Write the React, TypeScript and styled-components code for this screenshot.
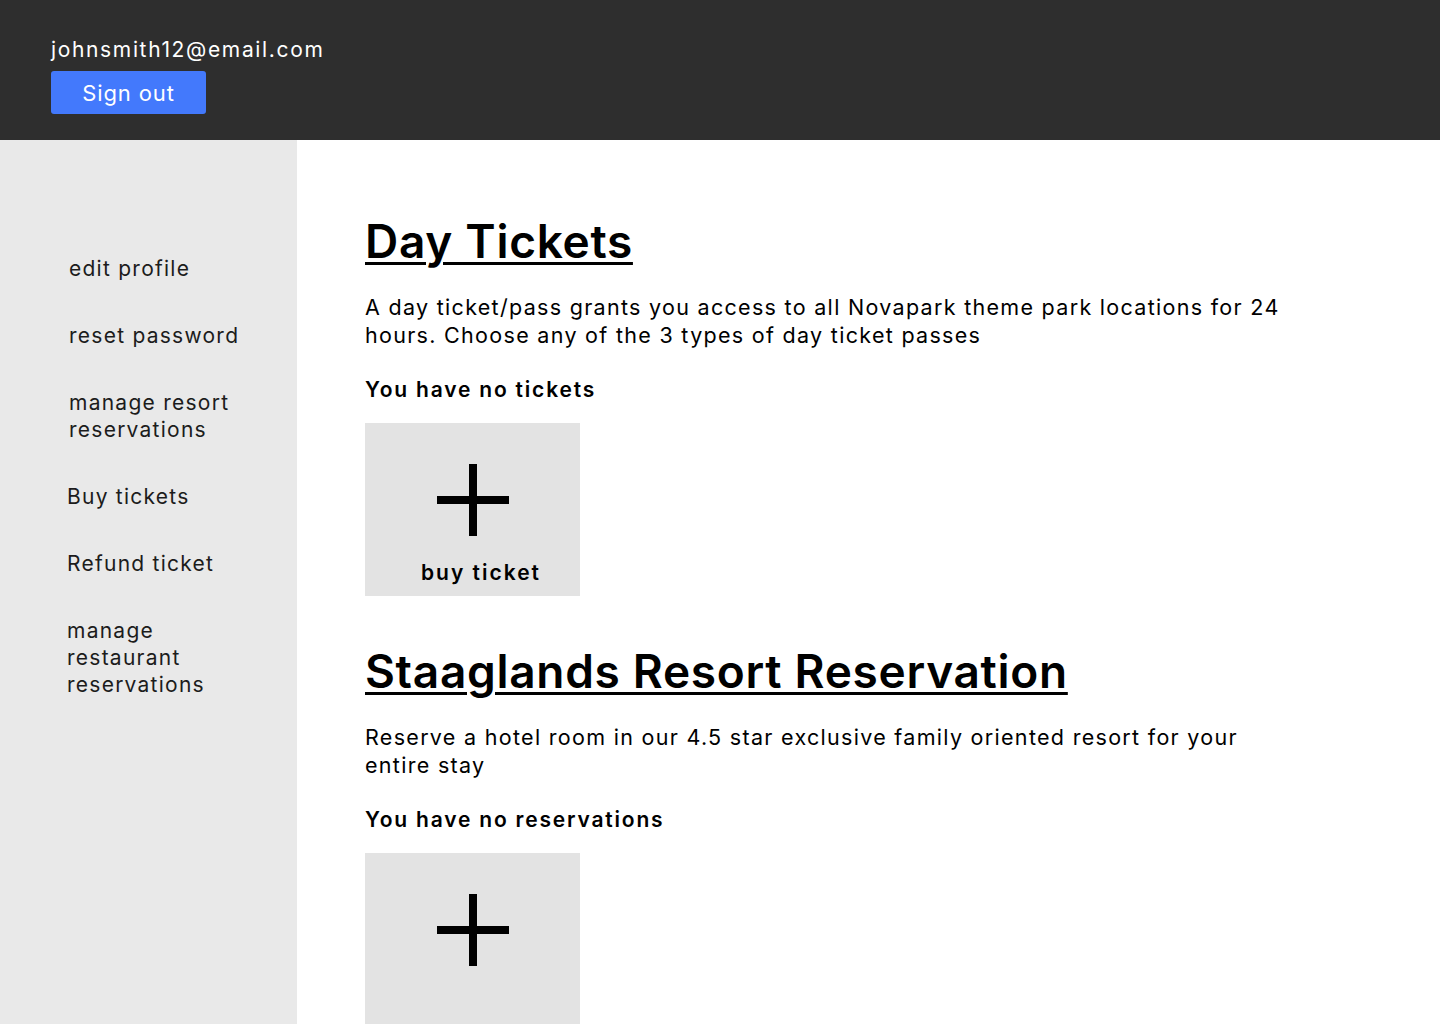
import styled, { createGlobalStyle } from "styled-components";

const GlobalStyle = createGlobalStyle`
   html, body {
      margin: 0;
      padding: 0;
   }
   body {
      font-family: Inter, "Noto Sans", sans-serif;
      color: #000;
   }
   * {
      box-sizing: border-box;
   }
`;

const sideLinks = [
   { label: "edit profile", indent: 69 },
   { label: "reset password", indent: 69 },
   { label: "manage resort reservations", indent: 69 },
   { label: "Buy tickets", indent: 67 },
   { label: "Refund ticket", indent: 67 },
   { label: "manage restaurant reservations", indent: 67 },
];

function PlusIcon() {
   return (
      <svg width="72" height="72" viewBox="0 0 72 72" fill="none">
         <rect x="32" y="0" width="8" height="72" fill="#000" />
         <rect x="0" y="32" width="72" height="8" fill="#000" />
      </svg>
   );
}

export default function App() {
   return (
      <Page>
         <GlobalStyle />
         <TopBar>
            <Email>johnsmith12@email.com</Email>
            <SignOut>Sign out</SignOut>
         </TopBar>
         <Body>
            <Sidebar>
               {sideLinks.map((link) => (
                  <SideLink key={link.label} $indent={link.indent}>
                     {link.label}
                  </SideLink>
               ))}
            </Sidebar>
            <Main>
               <Section>
                  <Heading>Day Tickets</Heading>
                  <Blurb>
                     A day ticket/pass grants you access to all Novapark theme park locations for 24
                     hours. Choose any of the 3 types of day ticket passes
                  </Blurb>
                  <Status>You have no tickets</Status>
                  <AddCard>
                     <PlusIcon />
                     <CardLabel>buy ticket</CardLabel>
                  </AddCard>
               </Section>
               <Section>
                  <Heading>Staaglands Resort Reservation</Heading>
                  <Blurb>
                     Reserve a hotel room in our 4.5 star exclusive family oriented resort for your
                     entire stay
                  </Blurb>
                  <Status>You have no reservations</Status>
                  <AddCard>
                     <PlusIcon />
                  </AddCard>
               </Section>
            </Main>
         </Body>
      </Page>
   );
}

const Page = styled.div`
   display: flex;
   flex-direction: column;
   width: 1440px;
   height: 1024px;
   overflow: hidden;
   background: #fff;
`;

const TopBar = styled.header`
   flex: 0 0 140px;
   display: flex;
   flex-direction: column;
   align-items: flex-start;
   padding: 38px 0 0 51px;
   background: #2e2e2e;
`;

const Email = styled.div`
   font-size: 21px;
   line-height: 24px;
   letter-spacing: 1.65px;
   color: #fff;
`;

const SignOut = styled.button`
   display: flex;
   align-items: center;
   justify-content: center;
   width: 155px;
   height: 43px;
   margin-top: 9px;
   padding: 0;
   border: none;
   border-radius: 3px;
   background: #4379fc;
   color: #fff;
   font-family: inherit;
   font-size: 22px;
   letter-spacing: 0.9px;
   cursor: pointer;
`;

const Body = styled.div`
   flex: 1;
   display: flex;
   min-height: 0;
`;

const Sidebar = styled.nav`
   flex: 0 0 297px;
   display: flex;
   flex-direction: column;
   gap: 40px;
   padding-top: 115px;
   background: #e9e9e9;
`;

const SideLink = styled.a<{ $indent: number }>`
   display: block;
   max-width: ${(p) => p.$indent + 195}px;
   padding-left: ${(p) => p.$indent}px;
   font-size: 21px;
   line-height: 27px;
   letter-spacing: 1.25px;
   color: #1c1c1c;
   cursor: pointer;
`;

const Main = styled.main`
   flex: 1;
   display: flex;
   flex-direction: column;
   gap: 46px;
   padding: 72px 0 0 68px;
`;

const Section = styled.section`
   display: flex;
   flex-direction: column;
   align-items: flex-start;
`;

const Heading = styled.h1`
   margin: 0 0 23px;
   font-size: 46px;
   line-height: 58px;
   font-weight: 600;
   letter-spacing: 0.7px;
   text-decoration: underline;
   text-decoration-thickness: 3px;
   text-underline-offset: 4px;
`;

const Blurb = styled.p`
   width: 935px;
   margin: 0 0 27px;
   font-size: 21.5px;
   line-height: 28px;
   letter-spacing: 1.3px;
`;

const Status = styled.h2`
   margin: 0 0 19px;
   font-size: 21px;
   line-height: 28px;
   font-weight: 600;
   letter-spacing: 1.8px;
`;

const AddCard = styled.div`
   display: flex;
   flex-direction: column;
   align-items: center;
   flex-shrink: 0;
   width: 215px;
   height: 173px;
   padding-top: 41px;
   background: #e3e3e3;
   cursor: pointer;
`;

const CardLabel = styled.span`
   margin: 23px 0 0 17px;
   font-size: 21px;
   line-height: 28px;
   font-weight: 600;
   letter-spacing: 2px;
`;
